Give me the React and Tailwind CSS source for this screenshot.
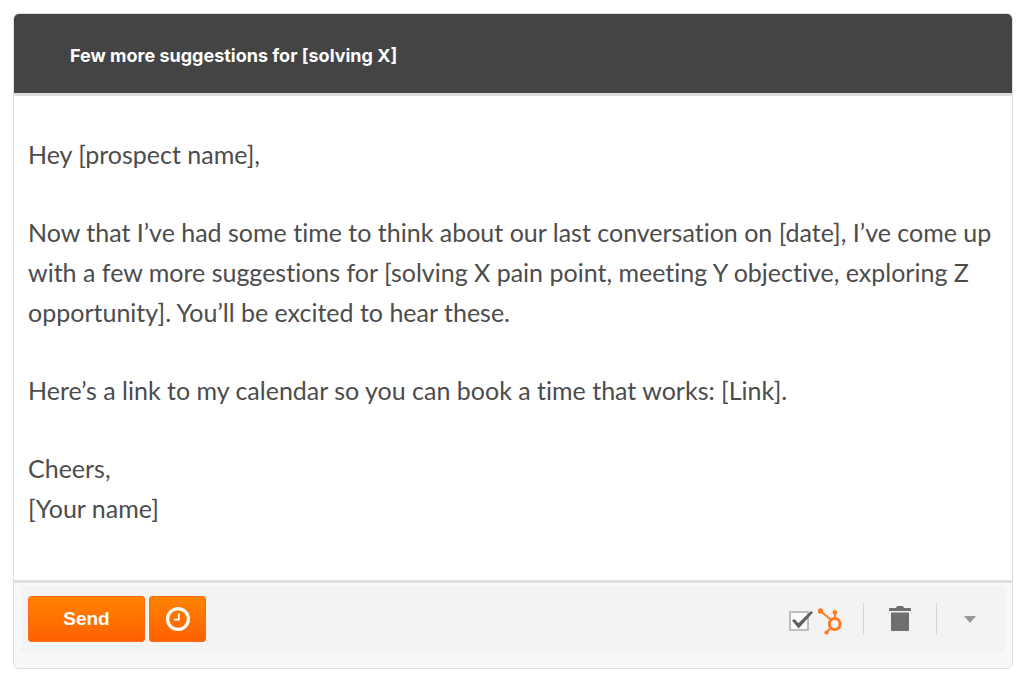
import React, { useState } from "react";

const paragraphs = [
  ["Hey [prospect name],"],
  [
    "Now that I’ve had some time to think about our last conversation on [date], I’ve come up with a few more suggestions for [solving X pain point, meeting Y objective, exploring Z opportunity]. You’ll be excited to hear these.",
  ],
  ["Here’s a link to my calendar so you can book a time that works: [Link]."],
  ["Cheers,", "[Your name]"],
];

function ClockIcon() {
  return (
    <svg width="26" height="26" viewBox="0 0 26 26" fill="none" stroke="#fff" aria-hidden="true">
      <circle cx="13" cy="13" r="10.4" strokeWidth="3.2" />
      <path d="M13.8 7.5v6.2H9" strokeWidth="1.8" />
    </svg>
  );
}

function SprocketIcon() {
  return (
    <svg width="26" height="28" viewBox="0 0 26 28" fill="none" stroke="#ff7a22" aria-hidden="true">
      <circle cx="17.7" cy="17" r="5.4" strokeWidth="3" />
      <path d="M3.5 4l9.8 8.2M17.9 5.5v6M13.8 21l-4 4" strokeWidth="2" />
      <g fill="#ff7a22" stroke="none">
        <circle cx="3.5" cy="4" r="2.7" />
        <circle cx="17.9" cy="5.3" r="2.3" />
        <circle cx="9.5" cy="25.5" r="2.1" />
      </g>
    </svg>
  );
}

function TrashIcon() {
  return (
    <svg width="22" height="26" viewBox="0 0 22 26" fill="#6f6f6f" aria-hidden="true">
      <path d="M8 0h6l1 2h6q1 0 1 1v2H0V3q0-1 1-1h6z" />
      <path d="M2 6.5h18V24q0 1-1 1H3q-1 0-1-1z" />
    </svg>
  );
}

export default function App() {
  const [tracked, setTracked] = useState(true);

  return (
    <div className="min-h-screen bg-white pt-[13px] pr-[11px] pb-[13px] pl-[13px] font-['Lato','Liberation_Sans',sans-serif]">
      <div className="overflow-hidden rounded-md border border-[#dedede] bg-[#f8f8f8]">
        <header className="border-b-3 border-[#dddddd] bg-[#444444] px-14 pt-[26px] pb-[21px]">
          <h1 className="font-['Inter','Liberation_Sans',sans-serif] text-[18px] leading-8 font-bold text-white">
            Few more suggestions for [solving X]
          </h1>
        </header>

        <main className="flex flex-col gap-[38px] bg-white px-[14px] pt-[38px] pb-[52px] text-[25px] leading-10 text-[#4c4c4c] [font-variant-ligatures:none]">
          {paragraphs.map((lines) => (
            <div key={lines[0]}>
              {lines.map((line) => (
                <p key={line}>{line}</p>
              ))}
            </div>
          ))}
        </main>

        <footer className="border-t-3 border-[#dedede] px-[7px] pt-[3px] pb-4">
          <div className="flex items-center justify-between bg-[#f3f3f3] py-[10px] pr-[29px] pl-[7px]">
            <div className="flex gap-1">
              <button
                type="button"
                className="h-[46px] w-[117px] rounded-[3px] border border-[#ff6a1a] bg-linear-to-b from-[#ff8200] to-[#ff6000] font-['Liberation_Sans',sans-serif] text-[19px] font-bold text-white"
              >
                Send
              </button>
              <button
                type="button"
                aria-label="Send later"
                className="flex h-[46px] w-[57px] items-center justify-center rounded-[3px] border border-[#ff6a1a] bg-linear-to-b from-[#ff8200] to-[#ff6000]"
              >
                <ClockIcon />
              </button>
            </div>

            <div className="flex items-center">
              <label className="flex items-center gap-2 pt-1">
                <span className="relative block size-5">
                  <input
                    type="checkbox"
                    aria-label="Track email"
                    checked={tracked}
                    onChange={(e) => setTracked(e.target.checked)}
                    className="block size-5 appearance-none border-2 border-[#bdbdbd] bg-[#fbfbfb]"
                  />
                  {tracked && (
                    <svg
                      className="pointer-events-none absolute top-0 left-0 overflow-visible"
                      width="24"
                      height="20"
                      viewBox="0 0 24 20"
                      fill="#5f5f5f"
                      aria-hidden="true"
                    >
                      <path d="M3 9.5L5.5 8l3.8 4.2L22 0l2 1.6L9.6 17.4z" />
                    </svg>
                  )}
                </span>
                <SprocketIcon />
              </label>
              <span className="ml-5 h-8 w-px bg-[#d4d4d4]" />
              <button type="button" aria-label="Delete" className="px-[25px]">
                <TrashIcon />
              </button>
              <span className="h-8 w-px bg-[#d4d4d4]" />
              <button type="button" aria-label="More options" className="pl-[27px]">
                <svg width="12" height="7" viewBox="0 0 12 7" fill="#999" aria-hidden="true">
                  <path d="M0 0h12L6 7z" />
                </svg>
              </button>
            </div>
          </div>
        </footer>
      </div>
    </div>
  );
}
